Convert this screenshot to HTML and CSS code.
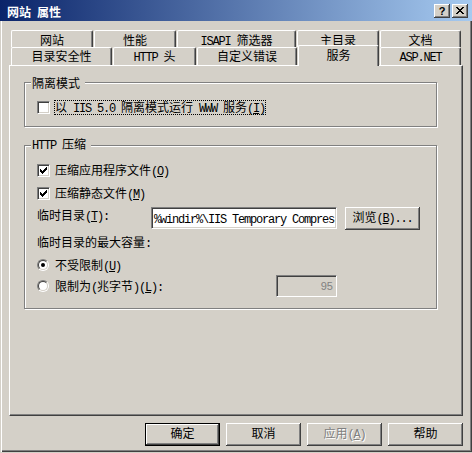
FILE: index.html
```html
<!DOCTYPE html>
<html lang="zh-CN">
<head>
<meta charset="utf-8">
<title>网站 属性</title>
<link rel="stylesheet" href="styles.css">
</head>
<body>
<div class="window">
  <div class="titlebar">
    <span class="title">网站<span class="en"> </span>属性</span>
    <div class="caption-btns">
      <span class="cbtn help">?</span>
      <span class="cbtn close">
        <svg width="8" height="7" viewBox="0 0 8 7" shape-rendering="crispEdges"><path d="M0 0h2v1H0zM6 0h2v1H6zM1 1h2v1H1zM5 1h2v1H5zM2 2h4v1H2zM3 3h2v1H3zM2 4h4v1H2zM1 5h2v1H1zM5 5h2v1H5zM0 6h2v1H0zM6 6h2v1H6z" fill="#000"/></svg>
      </span>
    </div>
  </div>
  <div class="body">
    <div class="tabs">
      <div class="tabrow back">
        <div class="tab w82">网站</div>
        <div class="tab w82">性能</div>
        <div class="tab w119"><span class="en">ISAPI </span>筛选器</div>
        <div class="tab w82">主目录</div>
        <div class="tab w81">文档</div>
      </div>
      <div class="tabrow front">
        <div class="tab w101">目录安全性</div>
        <div class="tab w83"><span class="en">HTTP </span>头</div>
        <div class="tab w100">自定义错误</div>
        <div class="tab w81 sel">服务</div>
        <div class="tab w81"><span class="en">ASP.NET</span></div>
      </div>
    </div>
    <div class="panel">
      <fieldset class="group">
        <legend>隔离模式</legend>
        <div class="gbody g1">
          <div class="row">
            <span class="check"></span>
            <span class="focus">以<span class="en"> IIS 5.0 </span>隔离模式运行<span class="en"> WWW </span>服务<span class="en">(<u>I</u>)</span></span>
          </div>
        </div>
      </fieldset>
      <fieldset class="group">
        <legend><span class="en">HTTP </span>压缩</legend>
        <div class="gbody g2">
          <div class="row">
            <span class="check"><svg width="7" height="7" viewBox="0 0 7 7" shape-rendering="crispEdges"><path d="M6 0h1v1H6zM5 1h2v1H5zM0 2h1v1H0zM4 2h3v1H4zM0 3h2v1H0zM3 3h3v1H3zM0 4h5v1H0zM1 5h3v1H1zM2 6h1v1H2z" fill="#000"/></svg></span>
            <span class="cb-label">压缩应用程序文件<span class="en">(<u>O</u>)</span></span>
          </div>
          <div class="row gap8">
            <span class="check"><svg width="7" height="7" viewBox="0 0 7 7" shape-rendering="crispEdges"><path d="M6 0h1v1H6zM5 1h2v1H5zM0 2h1v1H0zM4 2h3v1H4zM0 3h2v1H0zM3 3h3v1H3zM0 4h5v1H0zM1 5h3v1H1zM2 6h1v1H2z" fill="#000"/></svg></span>
            <span class="cb-label">压缩静态文件<span class="en">(<u>M</u>)</span></span>
          </div>
          <div class="dir-row">
            <span class="dir-label">临时目录<span class="en">(<u>T</u>):</span></span>
            <div class="textbox path-box"><span class="en">%windir%\IIS Temporary Compres</span></div>
            <div class="btn browse">浏览<span class="en">(<u>B</u>)...</span></div>
          </div>
          <div class="row gap5">
            <span class="plain">临时目录的最大容量<span class="en">:</span></span>
          </div>
          <div class="row gap8">
            <span class="radio"><span class="radio-in"><span class="dot"></span></span></span>
            <span class="cb-label r-label">不受限制<span class="en">(<u>U</u>)</span></span>
          </div>
          <div class="limit-row">
            <div class="limit">
              <span class="radio"><span class="radio-in"></span></span>
              <span class="cb-label r-label">限制为<span class="en">(</span>兆字节<span class="en">)(<u>L</u>):</span></span>
            </div>
            <div class="textbox size-box">95</div>
          </div>
        </div>
      </fieldset>
    </div>
    <div class="buttons">
      <div class="btn default">确定</div>
      <div class="btn">取消</div>
      <div class="btn disabled">应用<span class="en">(<u>A</u>)</span></div>
      <div class="btn">帮助</div>
    </div>
  </div>
</div>
</body>
</html>
```
FILE: styles.css
```css
* { box-sizing: border-box; }
html, body { margin: 0; padding: 0; }
body {
  width: 472px;
  height: 453px;
  overflow: hidden;
  background: #D4D0C8;
  font-family: "Noto Sans CJK SC", sans-serif;
  font-size: 12px;
  line-height: 13px;
  color: #000;
}
.en {
  font-family: "Liberation Mono", monospace;
  letter-spacing: -1.2px;
  white-space: pre;
}
u { text-decoration: underline; text-underline-offset: 1px; }

.window {
  width: 472px;
  height: 452px;
  display: flex;
  flex-direction: column;
}

/* title bar */
.titlebar {
  height: 21px;
  flex: none;
  display: flex;
  align-items: flex-start;
  justify-content: space-between;
  padding: 0 4px 0 7px;
  background: linear-gradient(to right, #0A246A, #A6CAF0);
}
.title {
  color: #fff;
  font-weight: bold;
  padding-top: 5px;
  white-space: nowrap;
}
.caption-btns {
  display: flex;
  gap: 2px;
  margin-top: 4px;
}
.cbtn {
  width: 16px;
  height: 14px;
  display: flex;
  align-items: center;
  justify-content: center;
  background: #D4D0C8;
  box-shadow: inset -1px -1px 0 #404040, inset 1px 1px 0 #fff, inset -2px -2px 0 #808080, inset 2px 2px 0 #D4D0C8;
}
.help {
  font: bold 11px/12px "Liberation Sans", sans-serif;
  padding-bottom: 1px;
}
.close svg { margin-left: -1px; margin-top: -1px; }

/* window body */
.body {
  flex: 1;
  box-shadow: inset 1px 0 0 #D4D0C8, inset 2px 0 0 #fff, inset -1px -1px 0 #404040, inset -2px -2px 0 #808080;
}

/* tabs */
.tabs { padding: 9px 0 0 11px; }
.tabrow { display: flex; gap: 1px; }
.back { height: 17px; }
.front { height: 18px; }
.tab {
  background: #D4D0C8;
  border-left: 1px solid #fff;
  border-top: 1px solid #fff;
  border-right: 1px solid #404040;
  box-shadow: inset -1px 0 0 #808080;
  border-radius: 2px 2px 0 0;
  text-align: center;
  white-space: nowrap;
  flex: none;
}
.back .tab { height: 17px; padding-top: 2px; line-height: 13px; }
.front .tab { height: 18px; padding-top: 1px; line-height: 13px; }
.front .tab.sel {
  height: 21px;
  margin-top: -2px;
  padding-top: 2px;
  position: relative;
  z-index: 2;
}
.w81 { width: 81px; }
.w82 { width: 82px; }
.w83 { width: 83px; }
.w100 { width: 100px; }
.w101 { width: 101px; }
.w119 { width: 119px; }

/* panel */
.panel {
  margin-left: 9px;
  width: 454px;
  height: 351px;
  border: 1px solid;
  border-color: #fff #404040 #404040 #fff;
  box-shadow: inset -1px -1px 0 #808080;
}

/* group boxes */
.group {
  margin: 10px 0 0 14px;
  width: 413px;
  min-width: 0;
  padding: 0;
  border: 1px solid #808080;
  box-shadow: inset 1px 1px 0 #fff, 1px 1px 0 #fff;
}
.group legend {
  margin-left: 6px;
  padding: 0 5px 0 1px;
  line-height: 13px;
  background: #D4D0C8;
}
.gbody { padding: 0 12px; }
.g1 { padding-top: 11px; padding-bottom: 11px; }
.g2 { padding-top: 10px; padding-bottom: 11px; }

.row {
  display: flex;
  align-items: flex-start;
  height: 15px;
}
.gap8 { margin-top: 8px; }
.gap5 { margin-top: 5px; }

.check {
  width: 13px;
  height: 13px;
  margin-top: 1px;
  flex: none;
  display: flex;
  align-items: center;
  justify-content: center;
  background: #fff;
  border: 1px solid;
  border-color: #808080 #fff #fff #808080;
  box-shadow: inset 1px 1px 0 #404040, inset -1px -1px 0 #D4D0C8;
}
.cb-label { margin-left: 5px; white-space: nowrap; }
.r-label { margin-left: 6px; }
.focus {
  margin-left: 4px;
  height: 15px;
  border: 1px dotted #000;
  line-height: 12px;
  padding-top: 0;
  white-space: nowrap;
}

.radio {
  width: 12px;
  height: 12px;
  margin-top: 1px;
  flex: none;
  border-radius: 50%;
  border: 1px solid;
  border-color: #808080 #fff #fff #808080;
}
.radio-in {
  width: 10px;
  height: 10px;
  border-radius: 50%;
  border: 1px solid;
  border-color: #404040 #D4D0C8 #D4D0C8 #404040;
  background: #fff;
  display: flex;
  align-items: center;
  justify-content: center;
}
.dot {
  width: 4px;
  height: 4px;
  border-radius: 50%;
  background: #000;
}

.dir-row {
  display: flex;
  align-items: flex-start;
  height: 23px;
  margin-top: 6px;
}
.dir-label {
  width: 114px;
  margin-top: 1px;
  flex: none;
  white-space: nowrap;
}
.textbox {
  height: 22px;
  flex: none;
  border: 1px solid;
  border-color: #808080 #fff #fff #808080;
  box-shadow: inset 1px 1px 0 #404040, inset -1px -1px 0 #D4D0C8;
  background: #fff;
  padding: 0 1px 0 2px;
  overflow: hidden;
  white-space: nowrap;
  line-height: 20px;
}
.path-box { width: 186px; }
.size-box {
  width: 61px;
  background: #D4D0C8;
  color: #808080;
  text-align: right;
  padding-right: 3px;
  font: 11px/20px "Liberation Sans", sans-serif;
}

.limit-row {
  display: flex;
  align-items: flex-start;
  height: 22px;
  margin-top: 2px;
}
.limit {
  width: 239px;
  display: flex;
  align-items: flex-start;
  padding-top: 4px;
}

/* buttons */
.btn {
  width: 75px;
  height: 23px;
  flex: none;
  background: #D4D0C8;
  box-shadow: inset -1px -1px 0 #404040, inset 1px 1px 0 #fff, inset -2px -2px 0 #808080, inset 2px 2px 0 #D4D0C8;
  text-align: center;
  padding-top: 3px;
  white-space: nowrap;
}
.browse { margin-left: 8px; }
.buttons {
  display: flex;
  justify-content: flex-end;
  gap: 6px;
  padding-right: 9px;
  margin-top: 7px;
}
.btn.default {
  border: 1px solid #000;
  padding-top: 2px;
}
.btn.disabled {
  color: #808080;
  text-shadow: 1px 1px 0 #fff;
}
```
